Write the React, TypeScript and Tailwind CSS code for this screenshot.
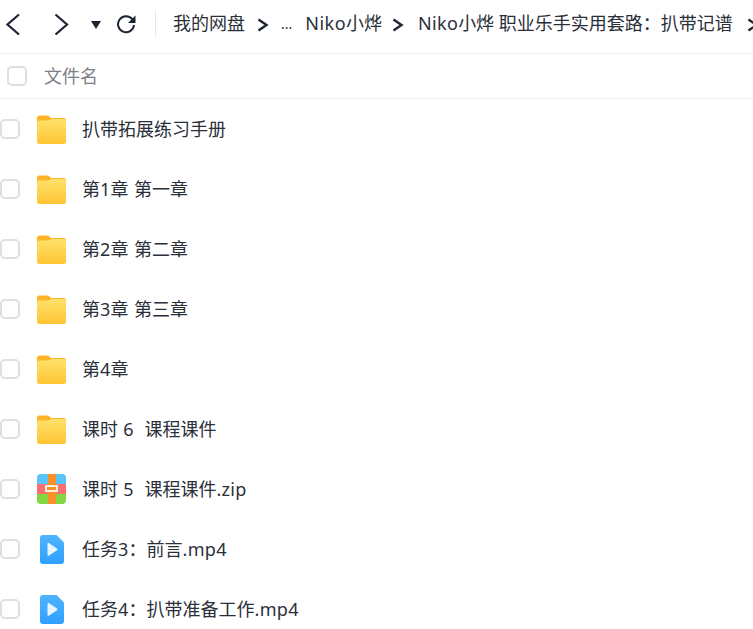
import React from "react";

const FONT = "font-['Noto_Sans','Noto_Sans_CJK_SC',sans-serif]";

function Folder() {
  return (
    <svg width="29" height="29" viewBox="0 0 29 29" className="shrink-0">
      <defs>
        <linearGradient id="fg" x1="0" y1="0" x2="0" y2="1">
          <stop offset="0" stopColor="#ffe26b" />
          <stop offset="1" stopColor="#ffc533" />
        </linearGradient>
      </defs>
      <path d="M0 3a2.500 2.500 0 0 1 2.500-2.500h7.500c1.200 0 2 .5 2.800 1.300l1.200 1.200h12.500a2.500 2.500 0 0 1 2.500 2.500v4h-29z" fill="#fdb528" />
      <path d="M0 7.500a2 2 0 0 1 2-2h9.500c1 0 1.500-.5 2.200-1.200l.4-.4h12.400a2.500 2.500 0 0 1 2.500 2.500v20a2.500 2.500 0 0 1-2.500 2.500h-24a2.500 2.500 0 0 1-2.500-2.500z" fill="url(#fg)" />
    </svg>
  );
}

function Zip() {
  return (
    <svg width="29" height="30" viewBox="0 0 29 30" className="shrink-0">
      <defs>
        <clipPath id="zc"><rect x="0" y="0" width="29" height="30" rx="4" /></clipPath>
      </defs>
      <g clipPath="url(#zc)">
        <rect width="29" height="10" fill="#59c4f8" />
        <rect y="10" width="29" height="10" fill="#fb6f6f" />
        <rect y="20" width="29" height="10" fill="#83d640" />
        <rect x="11" width="8" height="30" fill="#fb8f2c" />
        <rect x="8" y="11" width="13" height="7" rx="1" fill="#fff0dc" />
        <rect x="10" y="13" width="9" height="3" fill="#fb8f2c" />
      </g>
    </svg>
  );
}

function Video() {
  return (
    <svg width="24" height="29" viewBox="0 0 24 29" className="shrink-0">
      <defs>
        <linearGradient id="vg" x1="0" y1="0" x2="0" y2="1">
          <stop offset="0" stopColor="#4fb4ff" />
          <stop offset="1" stopColor="#2fa0ff" />
        </linearGradient>
      </defs>
      <path d="M3 0h13.500l7.500 7.500v18.500a3 3 0 0 1-3 3h-18a3 3 0 0 1-3-3v-23a3 3 0 0 1 3-3z" fill="url(#vg)" />
      <path d="M7.500 9.200c0-.9 1-1.400 1.700-.9l7.800 5.300c.6.400.6 1.300 0 1.700l-7.800 5.300c-.7.500-1.700 0-1.700-.9z" fill="#e8f5ff" />
    </svg>
  );
}

function Sep() {
  return (
    <svg width="12" height="14" viewBox="0 0 12 14" className="shrink-0">
      <path d="M1.500 1.500 L9.500 7 L1.500 12.500" fill="none" stroke="#1d2433" strokeWidth="2.400" />
    </svg>
  );
}

function Name({ text }: { text: string }) {
  const parts = text.split(/([\x21-\x7e]+)/);
  return (
    <span className="whitespace-pre [word-spacing:0.6px]">
      {parts.map((p, i) =>
        i % 2 === 1 ? (
          <span key={i} className="tracking-[0.3px]">{p}</span>
        ) : (
          <React.Fragment key={i}>{p}</React.Fragment>
        )
      )}
    </span>
  );
}

const rows: { name: string; icon: "folder" | "zip" | "video" }[] = [
  { name: "扒带拓展练习手册", icon: "folder" },
  { name: "第1章 第一章", icon: "folder" },
  { name: "第2章 第二章", icon: "folder" },
  { name: "第3章 第三章", icon: "folder" },
  { name: "第4章", icon: "folder" },
  { name: "课时 6  课程课件", icon: "folder" },
  { name: "课时 5  课程课件.zip", icon: "zip" },
  { name: "任务3：前言.mp4", icon: "video" },
  { name: "任务4：扒带准备工作.mp4", icon: "video" },
];

export default function App() {
  return (
    <div className={`${FONT} h-[629px] w-[753px] overflow-hidden bg-white text-[18px] text-[#2a2f3a]`}>
      <div className="flex h-[54px] items-center overflow-hidden border-b border-[#f0f0f2] pb-[7px] whitespace-nowrap">
        <svg width="18" height="24" viewBox="0 0 18 24" className="ml-[4px] shrink-0">
          <path d="M15 3.500 L3.500 13.500 L15 23.500" fill="none" stroke="#1d2433" strokeWidth="2.200" />
        </svg>
        <svg width="18" height="24" viewBox="0 0 18 24" className="ml-[31px] shrink-0">
          <path d="M2.500 3.500 L14 13.500 L2.500 23.500" fill="none" stroke="#1d2433" strokeWidth="2.200" />
        </svg>
        <svg width="10" height="8" viewBox="0 0 10 8" className="ml-[20px] mt-[3px] shrink-0">
          <path d="M0 0h10L5 8z" fill="#1d2433" />
        </svg>
        <svg width="20" height="20" viewBox="0 0 20 20" className="ml-[15px] mt-[1px] shrink-0">
          <path d="M16.500 5.500 A8 8 0 1 0 18 11" fill="none" stroke="#1d2433" strokeWidth="2" />
          <path d="M19.500 1.500 V9 H12 z" fill="#1d2433" />
        </svg>
        <div className="ml-[19px] h-[26px] w-px shrink-0 bg-[#e8e8ea]" />
        <span className="ml-[17px] shrink-0">我的网盘</span>
        <span className="ml-[12px] mt-[3px] flex"><Sep /></span>
        <span className="ml-[12px] shrink-0 text-[14px]">...</span>
        <span className="ml-[13px] shrink-0 [&>i]:not-italic [&>i]:tracking-[0.5px]"><i>Niko</i>小烨</span>
        <span className="ml-[10px] mt-[3px] flex"><Sep /></span>
        <span className="ml-[14px] shrink-0 [&>i]:not-italic [&>i]:tracking-[0.3px]"><i>Niko</i>小烨 职业乐手实用套路：扒带记谱</span>
        <span className="ml-[14px] mt-[3px] flex"><Sep /></span>
      </div>
      <div className="flex h-[45px] items-center border-b border-[#f0f0f2]">
        <span className="ml-[7px] h-[20px] w-[20px] shrink-0 rounded-[5px] border-2 border-[#dfdfdf]" />
        <span className="ml-[17px] text-[#7d7f87]">文件名</span>
      </div>
      {rows.map((r) => (
        <div key={r.name} className="flex h-[60px] items-center">
          <span className="h-[20px] w-[20px] shrink-0 rounded-[5px] border-2 border-[#dfdfdf]" />
          <span className="ml-[17px] mr-[16px] flex w-[29px] shrink-0 justify-center">
            {r.icon === "folder" && <Folder />}
            {r.icon === "zip" && <Zip />}
            {r.icon === "video" && <Video />}
          </span>
          <Name text={r.name} />
        </div>
      ))}
    </div>
  );
}
